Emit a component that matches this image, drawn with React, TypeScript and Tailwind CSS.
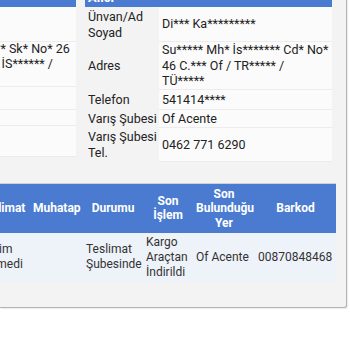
import React from "react";

type Row = { label: React.ReactNode; value: React.ReactNode; h?: string };

const font = { fontFamily: "Roboto, 'Noto Sans', 'Liberation Sans', sans-serif" };

function Lines({ items }: { items: string[] }) {
  return (
    <>
      {items.map((t, i) => (
        <span key={i} className="block whitespace-nowrap">
          {t}
        </span>
      ))}
    </>
  );
}

function InfoPanel({
  title,
  rows,
  labelW,
  valueW,
}: {
  title: string;
  rows: Row[];
  labelW: string;
  valueW: string;
}) {
  return (
    <div className="flex-shrink-0 flex flex-col">
      <div className="h-[18px] bg-[#4a7bd1] pl-[3px] text-[13px] font-bold leading-[18px] text-white">
        {title}
      </div>
      {rows.map((r, i) => (
        <div key={i} className={`flex ${r.h ?? ""}`}>
          <div
            className={`${labelW} flex flex-shrink-0 items-center pl-[3px] text-[12.5px] leading-[16px] text-[#222]`}
          >
            <div>{r.label}</div>
          </div>
          <div
            className={`${valueW} flex flex-shrink-0 items-center overflow-hidden border-b border-[#ececec] bg-[#fbfbfb] pl-[3px] text-[12.5px] leading-[15.5px] text-[#222]`}
          >
            <div>{r.value}</div>
          </div>
        </div>
      ))}
    </div>
  );
}

const sender: Row[] = [
  { label: "Ünvan/Ad Soyad", value: "Ay*** Yı*****", h: "h-[35px]" },
  {
    label: "Adres",
    value: (
      <Lines items={["Ca****** Mh* Ke***** Sk* No* 26", "D* 3 Ka***** Ba*** / İS****** /", "TÜ*****"]} />
    ),
    h: "h-[45px]",
  },
  { label: "Telefon", value: "532****", h: "h-[23px]" },
  { label: "Çıkış Şubesi", value: "Of", h: "h-[16px]" },
  { label: "Çıkış Şubesi Tel.", value: "0462", h: "h-[31px]" },
];

const receiver: Row[] = [
  {
    label: (
      <>
        Ünvan/Ad
        <br />
        Soyad
      </>
    ),
    value: "Di*** Ka*********",
    h: "h-[35px]",
  },
  {
    label: "Adres",
    value: <Lines items={["Su***** Mh* İs******* Cd* No*", "46 C.*** Of / TR***** /", "TÜ*****"]} />,
    h: "h-[48px]",
  },
  { label: "Telefon", value: "541414****", h: "h-[20px]" },
  { label: "Varış Şubesi", value: "Of Acente", h: "h-[18px]" },
  {
    label: (
      <>
        Varış Şubesi
        <br />
        Tel.
      </>
    ),
    value: "0462 771 6290",
    h: "h-[34px]",
  },
];

const columns = [
  { title: "Teslimat", w: "w-[56px]" },
  { title: "Muhatap", w: "w-[53px]" },
  { title: "Durumu", w: "w-[60px]" },
  { title: "Son İşlem", w: "w-[50px]" },
  { title: "Son Bulunduğu Yer", w: "w-[62px]" },
  { title: "Barkod", w: "w-[81px]" },
];

const movement = ["Teslim Edilmedi", "", "Teslimat Şubesinde", "Kargo Araçtan İndirildi", "Of Acente", "00870848468"];

export default function App() {
  return (
    <div className="h-[350px] w-[350px] overflow-hidden bg-white" style={font}>
      <div className="-mt-[11px] w-[347px] rounded-br-[3px] border-b border-r border-[#b4b4b4] bg-[#f3f3f3] shadow-[1px_1px_1px_rgba(0,0,0,0.08)]">
        {/* Sender / receiver panels */}
        <div className="flex justify-end gap-[9px] pr-[14px]">
          <InfoPanel title="Gönderici" rows={sender} labelW="w-[75px]" valueW="w-[191px]" />
          <InfoPanel title="Alıcı" rows={receiver} labelW="w-[74px]" valueW="w-[173px]" />
        </div>

        {/* Shipment movements */}
        <div className="mt-[21px] flex justify-end pr-[10px] pb-[25px]">
          <table className="w-[362px] flex-shrink-0 table-fixed border-collapse border-t border-[#d0d0d0]">
            <colgroup>
              {columns.map((c, i) => (
                <col key={i} className={c.w} />
              ))}
            </colgroup>
            <thead>
              <tr className="h-[49px] bg-[#4a7bd1]">
                {columns.map((c, i) => (
                  <th
                    key={i}
                    className="px-[3px] text-center align-middle text-[12px] font-bold leading-[14.5px] text-white"
                  >
                    {c.title}
                  </th>
                ))}
              </tr>
            </thead>
            <tbody>
              <tr className="h-[49px] bg-[#eef2f9]">
                {movement.map((v, i) => (
                  <td key={i} className="px-[3px] text-left align-middle text-[12px] leading-[15px] text-[#333]">
                    {v}
                  </td>
                ))}
              </tr>
            </tbody>
          </table>
        </div>
      </div>
    </div>
  );
}
